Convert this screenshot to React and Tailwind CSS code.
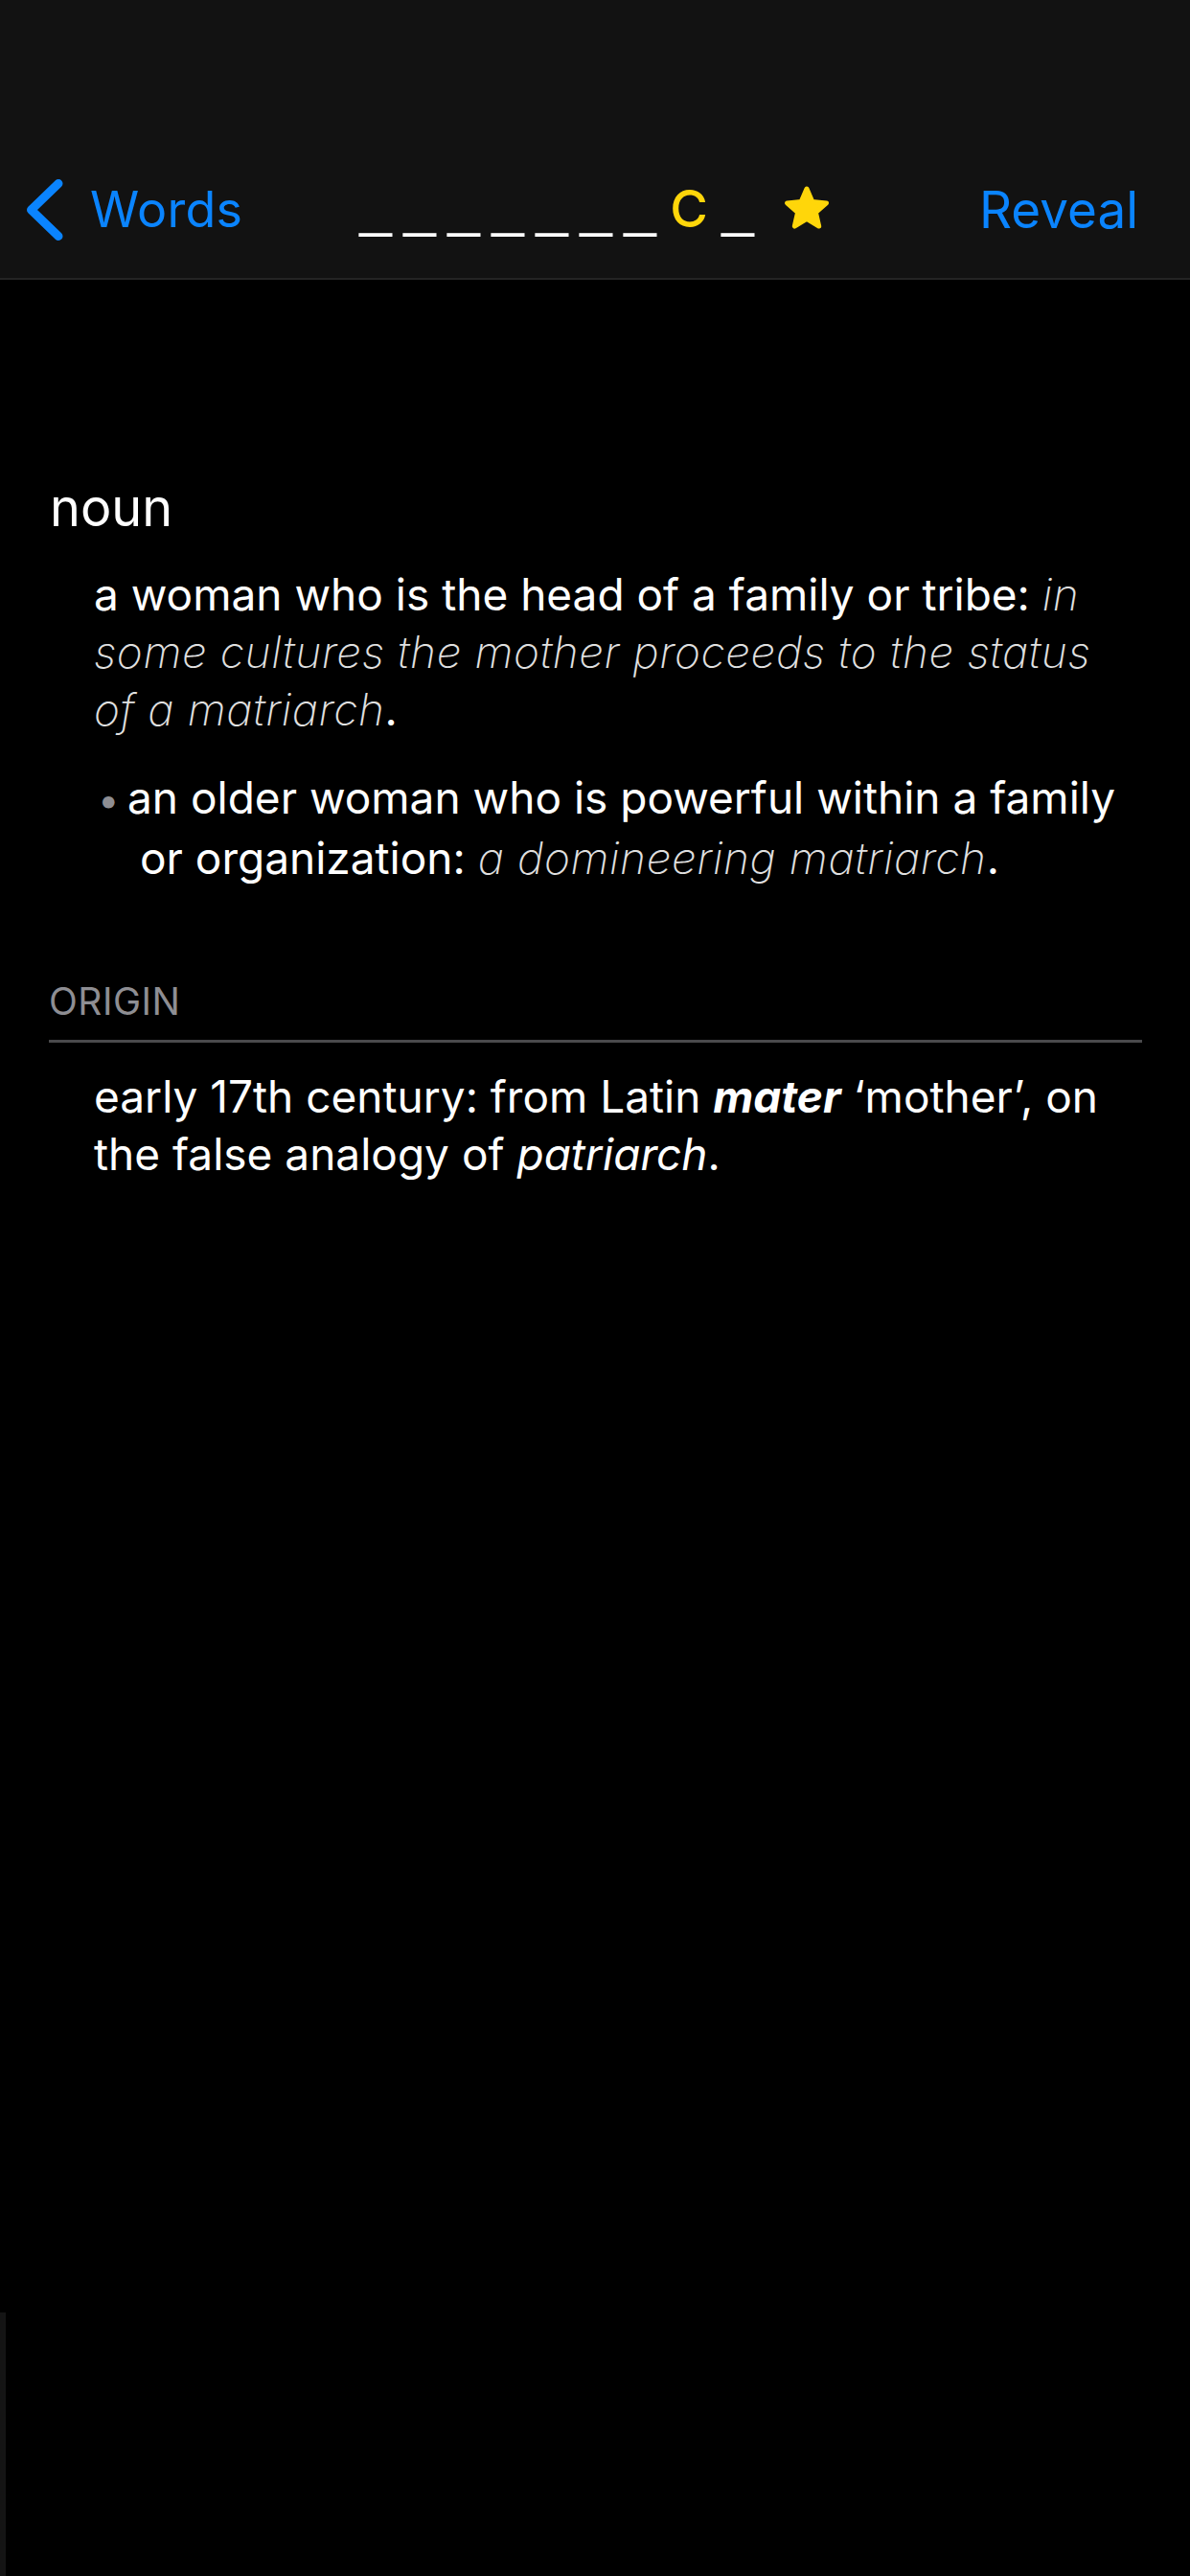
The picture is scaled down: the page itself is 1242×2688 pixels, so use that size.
const font = { fontFamily: 'Inter, "Liberation Sans", sans-serif' }

const Chevron = () => (
  <svg width="40" height="64" viewBox="0 0 40 64" className="shrink-0">
    <polyline
      points="34,4.5 5.5,32 34,59.5"
      fill="none"
      stroke="#0a84ff"
      strokeWidth="9"
      strokeLinecap="round"
      strokeLinejoin="round"
    />
  </svg>
)

const Star = () => (
  <svg width="50" height="48" viewBox="0 0 50 48">
    <polygon
      points="25,4 30.8,17.6 45.5,18.9 34.4,28.6 37.7,43 25,35.4 12.3,43 15.6,28.6 4.5,18.9 19.2,17.6"
      fill="#ffd60a"
      stroke="#ffd60a"
      strokeWidth="5"
      strokeLinejoin="round"
    />
  </svg>
)

const Blank = () => (
  <span className="inline-block w-[34px] text-white font-bold text-[61px] leading-none scale-y-[1.6] origin-bottom" style={{ fontFamily: '"Liberation Sans", sans-serif' }}>
    _
  </span>
)

const App = () => {
  return (
    <div className="min-h-screen bg-black relative text-white" style={font}>
      <div className="absolute left-0 top-[2413px] bottom-0 w-[6px] bg-[#141414]" />

      <header className="bg-[#121212] border-b-2 border-[#242424]">
        <div className="h-[148px]" />
        <nav className="h-[142px] grid grid-cols-[1fr_auto_1fr] items-center">
          <div className="flex items-center pl-[27px] gap-[27px] text-[#0a84ff] text-[52px]">
            <Chevron />
            <span className="leading-none tracking-[0.3px]">Words</span>
          </div>

          <div className="flex items-end gap-[12px] h-[64px]">
            <Blank />
            <Blank />
            <Blank />
            <Blank />
            <Blank />
            <Blank />
            <Blank />
            <span className="inline-block w-[44px] text-center text-[#ffd60a] text-[54px] leading-none font-medium mb-[6px]">C</span>
            <Blank />
            <span className="ml-[18px] mb-[10px]"><Star /></span>
          </div>

          <div className="flex justify-end pr-[54px] text-[#0a84ff] text-[53px] leading-none">
            Reveal
          </div>
        </nav>
      </header>

      <main className="pt-[208px] pr-[70px]">
        <h2 className="pl-[52px] text-[54px] leading-[60px]">noun</h2>

        <div className="pl-[98px] mt-[30px] text-[46px] leading-[60px]">
          <p>
            a woman who is the head of a family or tribe:{' '}
            <span className="italic font-extralight text-[#e0e0e0] tracking-[0.6px]">
              in some cultures the mother proceeds to the status of a matriarch
            </span>
            .
          </p>

          <p className="mt-[32px] pl-[48px] -indent-[48px]">
            <span className="inline-block w-[35px] indent-0 text-[#8e8e93] pl-[4px] text-[40px]">•</span>
            an older woman who is powerful within a family or organization:{' '}
            <span className="italic font-extralight text-[#e0e0e0] tracking-[0.6px]">a domineering matriarch</span>.
          </p>
        </div>

        <div className="mt-[95px] pl-[51px] -mr-[20px]">
          <div className="text-[39px] leading-[50px] text-[#8e8e93] tracking-[0.5px]">ORIGIN</div>
          <div className="mt-[15px] h-[3px] bg-[#4a4a4c]" />
        </div>

        <p className="pl-[98px] mt-[26px] text-[46px] leading-[60px]">
          early 17th century: from Latin <span className="italic font-bold">mater</span> ‘mother’, on the false analogy of{' '}
          <span className="italic">patriarch</span>.
        </p>
      </main>
    </div>
  )
}

export default App
